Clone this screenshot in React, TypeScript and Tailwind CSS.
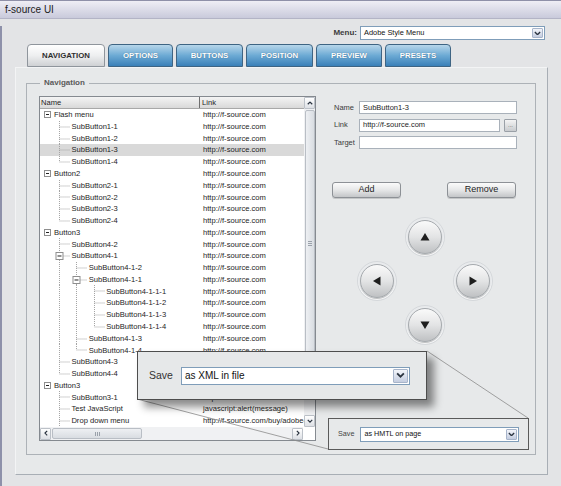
import React from 'react';

type TreeNode = { name: string; link: string; children?: TreeNode[]; more?: boolean };

type Row = {
  name: string;
  link: string;
  level: number;
  guides: boolean[];
  last: boolean;
  open: boolean;
};

const URL = 'http://f-source.com';

const TREE: TreeNode[] = [
  {
    name: 'Flash menu',
    link: URL,
    children: [
      { name: 'SubButton1-1', link: URL },
      { name: 'SubButton1-2', link: URL },
      { name: 'SubButton1-3', link: URL },
      { name: 'SubButton1-4', link: URL },
    ],
  },
  {
    name: 'Button2',
    link: URL,
    children: [
      { name: 'SubButton2-1', link: URL },
      { name: 'SubButton2-2', link: URL },
      { name: 'SubButton2-3', link: URL },
      { name: 'SubButton2-4', link: URL },
    ],
  },
  {
    name: 'Button3',
    link: URL,
    children: [
      { name: 'SubButton4-2', link: URL },
      {
        name: 'SubButton4-1',
        link: URL,
        children: [
          { name: 'SubButton4-1-2', link: URL },
          {
            name: 'SubButton4-1-1',
            link: URL,
            children: [
              { name: 'SubButton4-1-1-1', link: URL },
              { name: 'SubButton4-1-1-2', link: URL },
              { name: 'SubButton4-1-1-3', link: URL },
              { name: 'SubButton4-1-1-4', link: URL },
            ],
          },
          { name: 'SubButton4-1-3', link: URL },
          { name: 'SubButton4-1-4', link: URL },
        ],
      },
      { name: 'SubButton4-3', link: URL },
      { name: 'SubButton4-4', link: URL },
    ],
  },
  {
    name: 'Button3',
    link: URL,
    more: true,
    children: [
      { name: 'SubButton3-1', link: URL },
      { name: 'Test JavaScript', link: 'javascript:alert(message)' },
      { name: 'Drop down menu', link: 'http://f-source.com/buy/adobe-style-menu' },
    ],
  },
];

function flatten(nodes: TreeNode[], level: number, guides: boolean[], out: Row[], more = false) {
  nodes.forEach((n, i) => {
    const last = i === nodes.length - 1 && !more;
    out.push({ name: n.name, link: n.link, level, guides, last, open: !!n.children });
    if (n.children) {
      flatten(n.children, level + 1, level === 0 ? [] : [...guides, !last], out, n.more);
    }
  });
  return out;
}

const ROWS = flatten(TREE, 0, [], []);

const TABS = [
  { label: 'NAVIGATION', w: 'w-[78px]', active: true },
  { label: 'OPTIONS', w: 'w-[65px]' },
  { label: 'BUTTONS', w: 'w-[67px]' },
  { label: 'POSITION', w: 'w-[67px]' },
  { label: 'PREVIEW', w: 'w-[66px]' },
  { label: 'PRESETS', w: 'w-[66px]' },
];

function Chevron({ size = 8 }: { size?: number }) {
  return (
    <svg width={size} height={size * 0.7} viewBox="0 0 8 5.6">
      <path d="M1 1.2 L4 4.2 L7 1.2" fill="none" stroke="#2b3440" strokeWidth="1.6" />
    </svg>
  );
}

function Expander() {
  return (
    <svg width="7" height="7" viewBox="0 0 7 7" className="shrink-0">
      <rect x="0.5" y="0.5" width="6" height="6" fill="#fff" stroke="#8e8e8e" />
      <path d="M2 3.5 H5" stroke="#222" />
    </svg>
  );
}

// one 17.4px slot of tree connector lines
function Guide({ kind, box }: { kind: 'pipe' | 'tee' | 'elbow' | 'none'; box?: boolean }) {
  return (
    <svg width="17.4" height="11.77" viewBox="0 0 17.4 11.77" className="shrink-0">
      {kind !== 'none' && (
        <path
          d={kind === 'elbow' ? 'M5.5 0 V6' : 'M5.5 0 V11.77'}
          stroke="#a3a3a3"
          strokeDasharray="1 1"
        />
      )}
      {(kind === 'tee' || kind === 'elbow') && (
        <path d="M5.5 6 H16" stroke="#a3a3a3" strokeDasharray="1 1" />
      )}
      {box && (
        <g>
          <rect x="2" y="2.5" width="7" height="7" fill="#fff" stroke="#8e8e8e" />
          <path d="M3.5 6 H7.5" stroke="#222" />
        </g>
      )}
    </svg>
  );
}

function TreeRow({ row, selected }: { row: Row; selected: boolean }) {
  return (
    <div className={`flex h-[11.77px] shrink-0 items-center ${selected ? 'bg-[#d9d9d9]' : ''}`}>
      <div className="flex h-full w-[160px] shrink-0 items-center overflow-hidden">
        {row.level === 0 ? (
          <span className="flex w-[14px] shrink-0 justify-center pl-[1px]">
            <Expander />
          </span>
        ) : (
          <>
            <span className="w-[14px] shrink-0" />
            {row.guides.map((g, i) => (
              <Guide key={i} kind={g ? 'pipe' : 'none'} />
            ))}
            <Guide kind={row.last ? 'elbow' : 'tee'} box={row.open} />
          </>
        )}
        <span className="whitespace-nowrap">{row.name}</span>
      </div>
      <div className="min-w-0 overflow-hidden whitespace-nowrap pl-[3px]">{row.link}</div>
    </div>
  );
}

function ScrollBtn({ dir }: { dir: 'up' | 'down' | 'left' | 'right' }) {
  const rot = { up: 'rotate-180', down: '', left: 'rotate-90', right: '-rotate-90' }[dir];
  return (
    <div className="flex h-[12px] w-[11px] shrink-0 items-center justify-center rounded-[1px] border border-[#bcc1c8] bg-gradient-to-b from-[#ffffff] to-[#dde0e5]">
      <span className={`flex ${rot}`}>
        <Chevron size={6} />
      </span>
    </div>
  );
}

function TreeList() {
  return (
    <div className="flex h-[345px] w-[277px] shrink-0 flex-col border border-[#858a90] bg-white text-[7.6px] text-[#1d1d1d]">
      <div className="flex min-h-0 flex-1">
        <div className="flex min-w-0 flex-1 flex-col">
          <div className="flex h-[12px] shrink-0 items-center border-b border-[#a8a8a8] bg-gradient-to-b from-[#f4f4f4] to-[#d9d9d9]">
            <div className="w-[160px] border-r border-[#6f6f6f] pl-[1px]">Name</div>
            <div className="pl-[2px]">Link</div>
          </div>
          <div className="flex min-h-0 flex-1 flex-col overflow-hidden">
            {ROWS.map((r, i) => (
              <TreeRow key={i} row={r} selected={r.name === 'SubButton1-3'} />
            ))}
          </div>
        </div>
        <div className="flex w-[11px] shrink-0 flex-col bg-[#f0f1f3]">
          <ScrollBtn dir="up" />
          <div className="mx-[0.5px] mt-[1px] flex h-[266px] items-center justify-center rounded-[2px] border border-[#b9bec5] bg-gradient-to-r from-[#eef0f3] to-[#d9dde2]">
            <div className="flex flex-col gap-[1px]">
              <span className="h-[1px] w-[4px] bg-[#9aa1aa]" />
              <span className="h-[1px] w-[4px] bg-[#9aa1aa]" />
              <span className="h-[1px] w-[4px] bg-[#9aa1aa]" />
            </div>
          </div>
          <div className="flex-1" />
          <ScrollBtn dir="down" />
        </div>
      </div>
      <div className="flex h-[13px] shrink-0 items-center bg-[#f0f1f3]">
        <ScrollBtn dir="left" />
        <div className="ml-[1px] flex h-[11px] w-[90px] items-center justify-center rounded-[2px] border border-[#b9bec5] bg-gradient-to-b from-[#eef0f3] to-[#d9dde2]">
          <div className="flex gap-[1px]">
            <span className="h-[4px] w-[1px] bg-[#9aa1aa]" />
            <span className="h-[4px] w-[1px] bg-[#9aa1aa]" />
            <span className="h-[4px] w-[1px] bg-[#9aa1aa]" />
          </div>
        </div>
        <div className="flex-1" />
        <ScrollBtn dir="right" />
        <div className="h-full w-[12px] bg-white" />
      </div>
    </div>
  );
}

function Field({ label, value, browse }: { label: string; value?: string; browse?: boolean }) {
  return (
    <div className="flex h-[13px] items-center">
      <span className="w-[27px] shrink-0 pl-[2px] text-[#3a3a3a]">{label}</span>
      <div
        className={`flex h-full items-center border border-[#a9b1ba] bg-white pl-[3px] text-[#1d1d1d] ${
          browse ? 'w-[141px]' : 'w-[158px]'
        }`}
      >
        {value}
      </div>
      {browse && (
        <div className="ml-[4px] flex h-[13px] w-[13px] items-center justify-center rounded-[1px] border border-[#9aa0a7] bg-gradient-to-b from-[#f4f4f4] to-[#c9cccf] text-[6px] leading-none text-[#555]">
          ...
        </div>
      )}
    </div>
  );
}

function GrayButton({ label }: { label: string }) {
  return (
    <div className="flex h-[16px] w-[69px] items-center justify-center rounded-[3px] border border-[#8d9196] bg-gradient-to-b from-[#fbfbfb] via-[#e6e7e8] to-[#c4c6c8] text-[9px] text-[#1f1f1f] shadow-[0_1px_0_rgba(0,0,0,0.15)]">
      {label}
    </div>
  );
}

function ArrowBtn({ dir }: { dir: 'up' | 'down' | 'left' | 'right' }) {
  const tri = {
    up: 'M5 1 L9.5 8.5 H0.5 Z',
    down: 'M5 9 L9.5 1.5 H0.5 Z',
    left: 'M1 5 L8.5 0.5 V9.5 Z',
    right: 'M9 5 L1.5 0.5 V9.5 Z',
  }[dir];
  return (
    <div className="flex h-[40px] w-[40px] items-center justify-center rounded-full border border-[#d5d8db] bg-[#e9ebed] shadow-[inset_0_-1px_1px_rgba(255,255,255,0.9)]">
      <div className="flex h-[34px] w-[34px] items-center justify-center rounded-full border border-[#a5a9ad] bg-gradient-to-b from-[#fafafa] via-[#e3e4e5] to-[#bfc1c3] shadow-[0_1px_1px_rgba(0,0,0,0.2)]">
        <svg width="10" height="10" viewBox="0 0 10 10">
          <path d={tri} fill="#1e1e1e" />
        </svg>
      </div>
    </div>
  );
}

function SelectBox({
  value,
  className,
  btn,
}: {
  value: string;
  className: string;
  btn: string;
}) {
  return (
    <div className={`flex items-center border border-[#7f9db9] bg-white ${className}`}>
      <span className="flex-1 whitespace-nowrap pl-[3px] text-[#111]">{value}</span>
      <span
        className={`m-[1px] flex items-center justify-center self-stretch rounded-[1px] border border-[#a7b4ca] bg-gradient-to-b from-[#f3f5fa] to-[#c4cde0] ${btn}`}
      >
        <Chevron size={btn === 'w-[15px]' ? 9 : 7} />
      </span>
    </div>
  );
}

export default function App() {
  return (
    <div className="relative h-[486px] w-[561px] overflow-hidden bg-[#e3e4e6] font-['Liberation_Sans',Arial,sans-serif]">
      {/* title bar */}
      <div className="flex h-[19px] items-center border-b border-t border-b-[#b3b4c6] border-t-[#8f90a8] bg-gradient-to-b from-[#efeef5] to-[#c9cadb] pl-[5px] text-[10px] text-[#1b1b1b]">
        f-source UI
      </div>

      <div className="h-[467px] border-l-2 border-[#8e91aa]">
        {/* menu picker */}
        <div className="flex h-[14px] items-center justify-end pr-[16px] pt-0 mt-[7px]">
          <span className="mr-[3px] text-[8px] font-bold text-[#3b3b3b]">Menu:</span>
          <SelectBox value="Adobe Style Menu" className="h-[14px] w-[185px] text-[7.4px]" btn="w-[11px]" />
        </div>

        {/* tabs */}
        <div className="ml-[25px] mt-[4px] flex h-[23px] gap-[3px]">
          {TABS.map((t) =>
            t.active ? (
              <div
                key={t.label}
                className={`flex h-full items-center justify-center rounded-t-[4px] border border-[#8f959c] bg-gradient-to-b from-[#ffffff] via-[#eeeff0] to-[#cfd1d4] text-[7.8px] font-bold text-[#2e2e2e] ${t.w}`}
              >
                {t.label}
              </div>
            ) : (
              <div
                key={t.label}
                className={`flex h-full items-center justify-center rounded-t-[4px] border border-[#3e6483] bg-gradient-to-b from-[#b7d6ea] via-[#6caad4] to-[#3a80b8] text-[7.8px] font-bold text-white [text-shadow:0_0_1px_rgba(20,50,80,0.6)] ${t.w}`}
              >
                {t.label}
              </div>
            ),
          )}
        </div>

        {/* panel */}
        <div className="ml-[13px] h-[408px] w-[533px] border border-b-[#a8aeb5] border-l-[#f3f4f5] border-r-[#a8aeb5] border-t-[#f3f4f5] bg-[#e7e9ea]">
          <fieldset className="ml-[10px] mt-[10px] h-[377px] w-[510px] border border-[#adb2b7] px-[12px] pb-0 pt-[8px]">
            <legend className="ml-[1px] px-[4px] text-[8px] font-bold leading-[10px] text-[#5a5a5a]">
              Navigation
            </legend>
            <div className="flex">
              <TreeList />
              <div className="ml-[16px] flex w-[185px] flex-col pt-[5px] text-[7.5px]">
                <div className="flex flex-col gap-[4.5px]">
                  <Field label="Name" value="SubButton1-3" />
                  <Field label="Link" value="http://f-source.com" browse />
                  <Field label="Target" />
                </div>
                <div className="mt-[33px] flex w-[184px] justify-between">
                  <GrayButton label="Add" />
                  <GrayButton label="Remove" />
                </div>
                <div className="ml-[21px] mt-[17px] grid grid-cols-[48px_48px_48px] grid-rows-[44px_44px_44px] place-items-center">
                  <span />
                  <ArrowBtn dir="up" />
                  <span />
                  <ArrowBtn dir="left" />
                  <span />
                  <ArrowBtn dir="right" />
                  <span />
                  <ArrowBtn dir="down" />
                  <span />
                </div>
              </div>
            </div>
          </fieldset>
        </div>
      </div>

      {/* zoom callout lines */}
      <svg className="pointer-events-none absolute left-0 top-0" width="561" height="486">
        <line x1="137" y1="399" x2="328" y2="449" stroke="#8b8b8b" strokeWidth="0.8" />
        <line x1="427" y1="351" x2="528" y2="418" stroke="#8b8b8b" strokeWidth="0.8" />
      </svg>

      {/* small save box */}
      <div className="absolute left-[328px] top-[418px] flex h-[32px] w-[201px] items-center border border-[#5a5a5a] bg-[#e7e9ea] pl-[9px] text-[7.2px]">
        <span className="mr-[6px] text-[#444]">Save</span>
        <SelectBox value="as HMTL on page" className="h-[15px] w-[159px]" btn="w-[11px]" />
      </div>

      {/* enlarged save callout */}
      <div className="absolute left-[137px] top-[351px] flex h-[49px] w-[290px] items-center border border-[#4d4d4d] bg-[#e6e8e9] pl-[11px] text-[10px] shadow-[7px_7px_8px_rgba(0,0,0,0.45)]">
        <span className="mr-[8px] text-[10.5px] text-[#333]">Save</span>
        <SelectBox value="as XML in file" className="h-[18px] w-[229px]" btn="w-[15px]" />
      </div>
    </div>
  );
}
